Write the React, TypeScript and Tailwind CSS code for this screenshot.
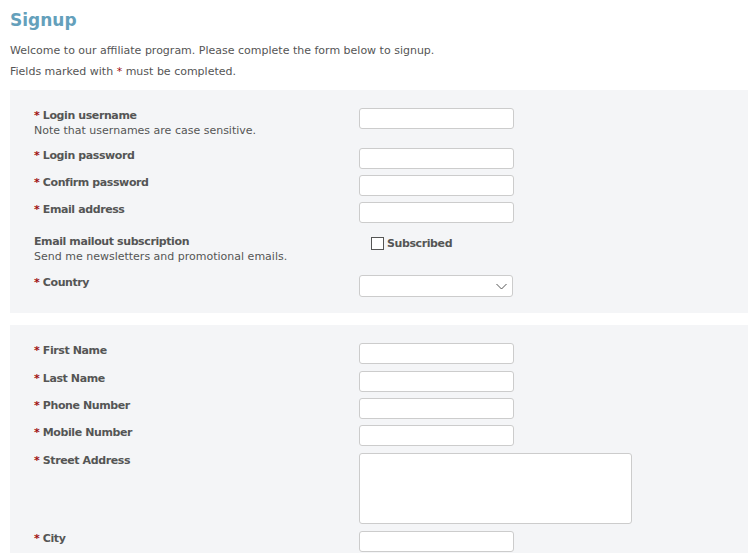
import React from 'react';

const Req = () => <span className="text-[#a01010]">* </span>;

const Input = ({ w = 'w-[155px]' }: { w?: string }) => (
    <input type="text" className={`${w} h-[21px] rounded-[3px] border border-[#cccccc] bg-white`} />
);

const Row = ({ h, label, note, req = true, children }: { h: string; label: string; note?: string; req?: boolean; children: React.ReactNode }) => (
    <div className={`flex ${h}`}>
        <div className="w-[325px] shrink-0 leading-[15px]">
            <div className="font-bold tracking-[-0.4px]">
                {req && <Req />}
                {label}
            </div>
            {note && <div>{note}</div>}
        </div>
        <div>{children}</div>
    </div>
);

export default function App() {
    return (
        <div className="min-h-[553px] bg-white pl-[10px] text-[11px] text-[#555555] font-['DejaVu_Sans',sans-serif]">
            <h1 className="pt-[9px] text-[17px] font-bold leading-[22px] text-[#64a0bb]">Signup</h1>
            <p className="mt-[9px] leading-[21px]">Welcome to our affiliate program. Please complete the form below to signup.</p>
            <p className="leading-[21px]">
                Fields marked with <span className="text-[#a01010]">*</span> must be completed.
            </p>

            <div className="mt-[8px] bg-[#f4f5f7] pl-[24px] pt-[18px] pb-[16px]">
                <Row h="h-[40px]" label="Login username" note="Note that usernames are case sensitive.">
                    <Input />
                </Row>
                <Row h="h-[27px]" label="Login password">
                    <Input />
                </Row>
                <Row h="h-[27px]" label="Confirm password">
                    <Input />
                </Row>
                <Row h="h-[32px]" label="Email address">
                    <Input />
                </Row>
                <Row h="h-[41px]" label="Email mailout subscription" note="Send me newsletters and promotional emails." req={false}>
                    <label className="ml-[12px] mt-[2px] flex items-center gap-[3px] font-bold leading-[15px] tracking-[-0.4px]">
                        <span className="block h-[13px] w-[13px] border border-[#555555] bg-white" />
                        <span>Subscribed</span>
                    </label>
                </Row>
                <Row h="h-[22px]" label="Country">
                    <div className="flex h-[22px] w-[154px] items-center justify-end rounded-[3px] border border-[#cccccc] bg-white pr-[5px]">
                        <svg width="11" height="7" viewBox="0 0 11 7" fill="none" stroke="#555555" strokeWidth="1">
                            <path d="M0.5 1l5 5 5-5" />
                        </svg>
                    </div>
                </Row>
            </div>

            <div className="mt-[12px] bg-[#f4f5f7] pl-[24px] pt-[18px]">
                <Row h="h-[28px]" label="First Name">
                    <Input />
                </Row>
                <Row h="h-[27px]" label="Last Name">
                    <Input />
                </Row>
                <Row h="h-[27px]" label="Phone Number">
                    <Input />
                </Row>
                <Row h="h-[28px]" label="Mobile Number">
                    <Input />
                </Row>
                <Row h="h-[78px]" label="Street Address">
                    <textarea className="block h-[71px] w-[273px] resize-none rounded-[3px] border border-[#cccccc] bg-white" />
                </Row>
                <Row h="h-[27px]" label="City">
                    <Input />
                </Row>
            </div>
        </div>
    );
}
